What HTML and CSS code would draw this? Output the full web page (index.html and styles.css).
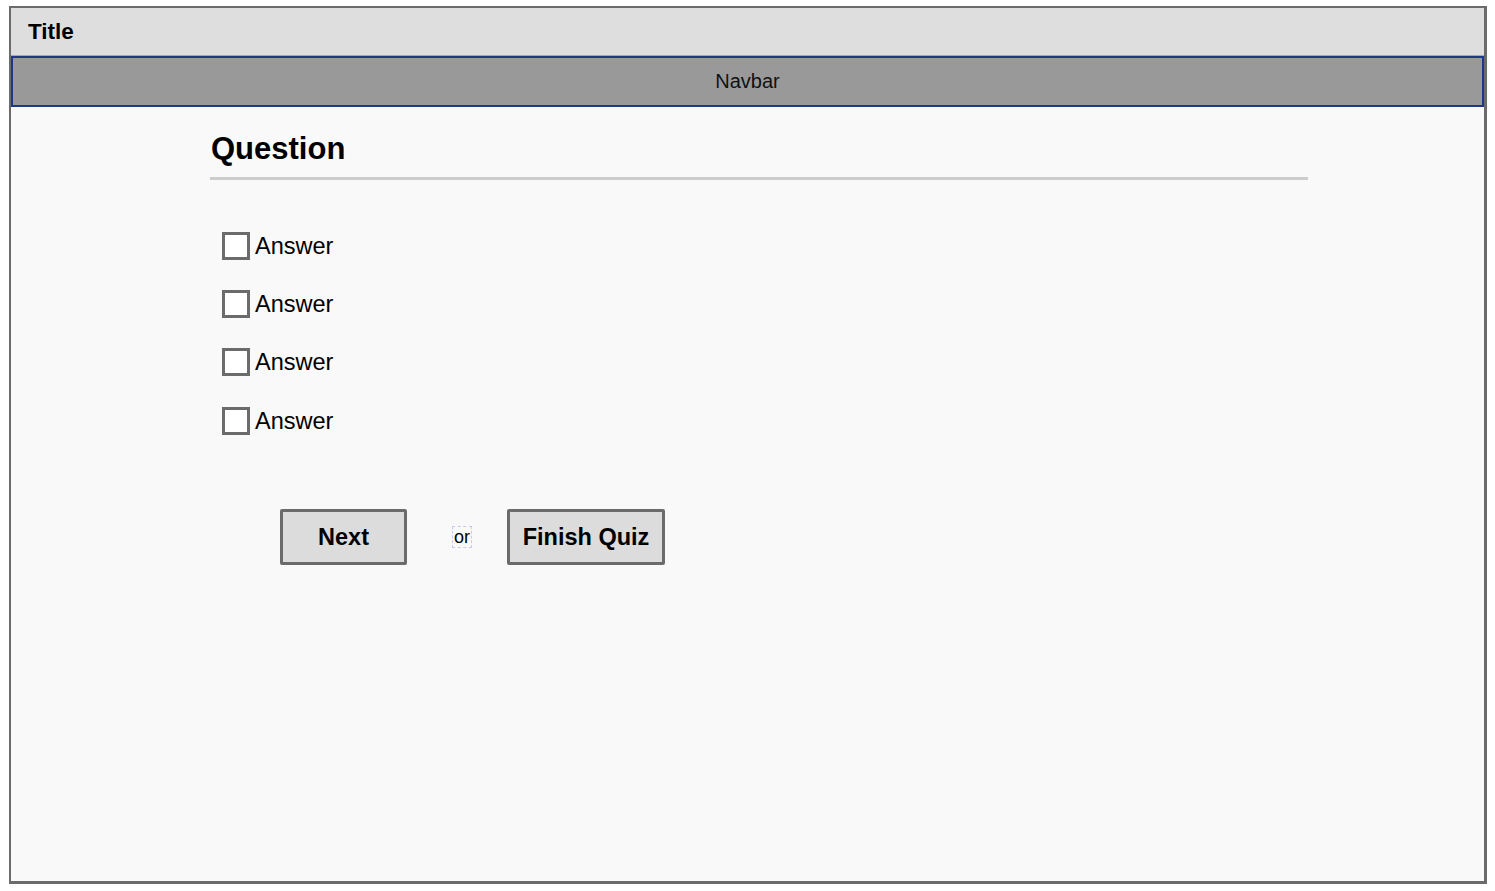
FILE: index.html
```html
<!DOCTYPE html>
<html>
<head>
<meta charset="utf-8">
<link rel="stylesheet" href="styles.css">
</head>
<body>
<div class="frame">
  <div class="titlebar">Title</div>
  <div class="navbar">Navbar</div>
  <div class="content">
    <h1 class="question">Question</h1>
    <div class="answers">
      <label class="answer"><span class="box"></span><span>Answer</span></label>
      <label class="answer"><span class="box"></span><span>Answer</span></label>
      <label class="answer"><span class="box"></span><span>Answer</span></label>
      <label class="answer"><span class="box"></span><span>Answer</span></label>
    </div>
    <div class="actions">
      <button class="btn btn-next">Next</button>
      <span class="or">or</span>
      <button class="btn btn-finish">Finish Quiz</button>
    </div>
  </div>
</div>
</body>
</html>
```
FILE: styles.css
```css
html, body {
  margin: 0;
  padding: 0;
  background: #ffffff;
  font-family: "Liberation Sans", Arial, sans-serif;
  color: #000;
}
.frame {
  margin: 6px 0 0 9px;
  width: 1478px;
  height: 878px;
  box-sizing: border-box;
  border-style: solid;
  border-color: #6b6b6b;
  border-width: 2px 3px 3px 2px;
  background: #f9f9f9;
  display: flex;
  flex-direction: column;
}
.titlebar {
  height: 48px;
  box-sizing: border-box;
  background: #dedede;
  border-bottom: 1px solid #a8a8a8;
  font-size: 22.5px;
  font-weight: bold;
  padding-left: 17px;
  display: flex;
  align-items: center;
}
.navbar {
  height: 51px;
  box-sizing: border-box;
  background: #999999;
  border: 2px solid #1f3787;
  display: flex;
  align-items: center;
  justify-content: center;
  font-size: 20px;
  color: #111;
}
.content {
  padding-left: 199px;
  padding-top: 22px;
}
.question {
  margin: 0;
  width: 1098px;
  font-size: 31px;
  font-weight: bold;
  line-height: 40px;
  padding-left: 1px;
  padding-bottom: 8px;
  border-bottom: 3px solid #cccccc;
  box-sizing: border-box;
}
.answers {
  display: flex;
  flex-direction: column;
  gap: 30px;
  padding-top: 52px;
  padding-left: 12px;
}
.answer {
  display: flex;
  align-items: center;
  height: 28px;
  font-size: 23.5px;
  gap: 5px;
}
.answer:nth-child(4) {
  margin-top: 1px;
}
.box {
  width: 28px;
  height: 28px;
  box-sizing: border-box;
  border: 3px solid #6b6b6b;
  background: #fff;
}
.actions {
  display: flex;
  align-items: center;
  padding-top: 74px;
  padding-left: 70px;
}
.btn {
  height: 56px;
  box-sizing: border-box;
  background: #dcdcdc;
  border: 3px solid #6b6b6b;
  border-radius: 2px;
  font-family: "Liberation Sans", Arial, sans-serif;
  font-size: 23.5px;
  font-weight: bold;
  color: #000;
  padding: 0;
}
.btn-next {
  width: 127px;
}
.btn-finish {
  width: 158px;
}
.or {
  margin: 0 35px 0 45px;
  font-size: 18px;
  border: 1px dashed #c8c8f0;
  padding: 0 1px;
  line-height: 20px;
}
```
